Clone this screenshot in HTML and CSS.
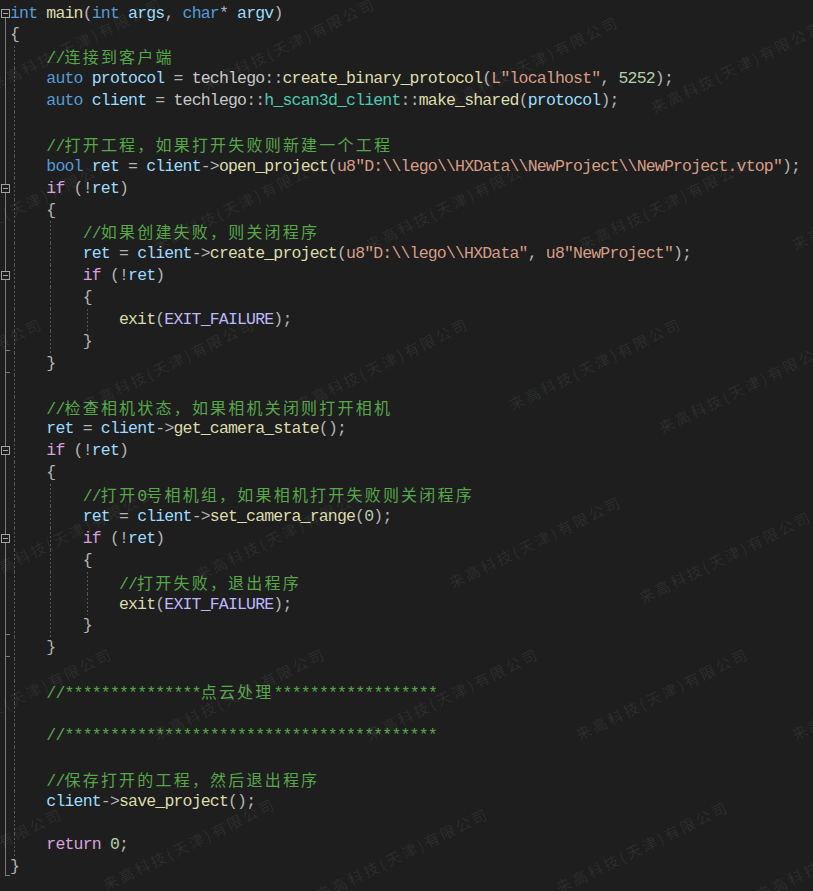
FILE: index.html
```html
<!DOCTYPE html>
<html>
<head>
<meta charset="utf-8">
<title>code</title>
<link rel="stylesheet" href="styles.css">
</head>
<body>
<div class="editor">
<div class="ln"><span class="gut box first"></span><span class="code"><span class="kw">int</span> <span class="fn">main</span>(<span class="kw">int</span> <span class="var">args</span>, <span class="kw">char</span>* <span class="var">argv</span>)</span></div>
<div class="ln"><span class="gut"></span><span class="code">{</span></div>
<div class="ln"><span class="gut"></span><span class="code"><span class="ind g"></span><span class="cm">//<span class="cjk">连接到客户端</span></span></span></div>
<div class="ln"><span class="gut"></span><span class="code"><span class="ind g"></span><span class="kw">auto</span> <span class="var">protocol</span> = <span class="ns">techlego</span>::<span class="fn">create_binary_protocol</span>(<span class="str">L"localhost"</span>, <span class="num">5252</span>);</span></div>
<div class="ln"><span class="gut"></span><span class="code"><span class="ind g"></span><span class="kw">auto</span> <span class="var">client</span> = <span class="ns">techlego</span>::<span class="ty">h_scan3d_client</span>::<span class="fn">make_shared</span>(<span class="var">protocol</span>);</span></div>
<div class="ln"><span class="gut"></span><span class="code"><span class="ind g"></span></span></div>
<div class="ln"><span class="gut"></span><span class="code"><span class="ind g"></span><span class="cm">//<span class="cjk">打开工程，如果打开失败则新建一个工程</span></span></span></div>
<div class="ln"><span class="gut"></span><span class="code"><span class="ind g"></span><span class="kw">bool</span> <span class="var">ret</span> = <span class="var">client</span>-&gt;<span class="fn">open_project</span>(<span class="str">u8"D:\\lego\\HXData\\NewProject\\NewProject.vtop"</span>);</span></div>
<div class="ln"><span class="gut box"></span><span class="code"><span class="ind g"></span><span class="ctl">if</span> (!<span class="var">ret</span>)</span></div>
<div class="ln"><span class="gut"></span><span class="code"><span class="ind g"></span>{</span></div>
<div class="ln"><span class="gut"></span><span class="code"><span class="ind g"></span><span class="ind g"></span><span class="cm">//<span class="cjk">如果创建失败，则关闭程序</span></span></span></div>
<div class="ln"><span class="gut"></span><span class="code"><span class="ind g"></span><span class="ind g"></span><span class="var">ret</span> = <span class="var">client</span>-&gt;<span class="fn">create_project</span>(<span class="str">u8"D:\\lego\\HXData"</span>, <span class="str">u8"NewProject"</span>);</span></div>
<div class="ln"><span class="gut box"></span><span class="code"><span class="ind g"></span><span class="ind g"></span><span class="ctl">if</span> (!<span class="var">ret</span>)</span></div>
<div class="ln"><span class="gut"></span><span class="code"><span class="ind g"></span><span class="ind g"></span>{</span></div>
<div class="ln"><span class="gut"></span><span class="code"><span class="ind g"></span><span class="ind g"></span><span class="ind g"></span><span class="fn">exit</span>(<span class="mac">EXIT_FAILURE</span>);</span></div>
<div class="ln"><span class="gut end"></span><span class="code"><span class="ind g"></span><span class="ind g"></span>}</span></div>
<div class="ln"><span class="gut end"></span><span class="code"><span class="ind g"></span>}</span></div>
<div class="ln"><span class="gut"></span><span class="code"><span class="ind g"></span></span></div>
<div class="ln"><span class="gut"></span><span class="code"><span class="ind g"></span><span class="cm">//<span class="cjk">检查相机状态，如果相机关闭则打开相机</span></span></span></div>
<div class="ln"><span class="gut"></span><span class="code"><span class="ind g"></span><span class="var">ret</span> = <span class="var">client</span>-&gt;<span class="fn">get_camera_state</span>();</span></div>
<div class="ln"><span class="gut box"></span><span class="code"><span class="ind g"></span><span class="ctl">if</span> (!<span class="var">ret</span>)</span></div>
<div class="ln"><span class="gut"></span><span class="code"><span class="ind g"></span>{</span></div>
<div class="ln"><span class="gut"></span><span class="code"><span class="ind g"></span><span class="ind g"></span><span class="cm">//<span class="cjk">打开</span>0<span class="cjk">号相机组，如果相机打开失败则关闭程序</span></span></span></div>
<div class="ln"><span class="gut"></span><span class="code"><span class="ind g"></span><span class="ind g"></span><span class="var">ret</span> = <span class="var">client</span>-&gt;<span class="fn">set_camera_range</span>(<span class="num">0</span>);</span></div>
<div class="ln"><span class="gut box"></span><span class="code"><span class="ind g"></span><span class="ind g"></span><span class="ctl">if</span> (!<span class="var">ret</span>)</span></div>
<div class="ln"><span class="gut"></span><span class="code"><span class="ind g"></span><span class="ind g"></span>{</span></div>
<div class="ln"><span class="gut"></span><span class="code"><span class="ind g"></span><span class="ind g"></span><span class="ind g"></span><span class="cm">//<span class="cjk">打开失败，退出程序</span></span></span></div>
<div class="ln"><span class="gut"></span><span class="code"><span class="ind g"></span><span class="ind g"></span><span class="ind g"></span><span class="fn">exit</span>(<span class="mac">EXIT_FAILURE</span>);</span></div>
<div class="ln"><span class="gut end"></span><span class="code"><span class="ind g"></span><span class="ind g"></span>}</span></div>
<div class="ln"><span class="gut end"></span><span class="code"><span class="ind g"></span>}</span></div>
<div class="ln"><span class="gut"></span><span class="code"><span class="ind g"></span></span></div>
<div class="ln"><span class="gut"></span><span class="code"><span class="ind g"></span><span class="cm">//***************<span class="cjk">点云处理</span>******************</span></span></div>
<div class="ln"><span class="gut"></span><span class="code"><span class="ind g"></span></span></div>
<div class="ln"><span class="gut"></span><span class="code"><span class="ind g"></span><span class="cm">//*****************************************</span></span></div>
<div class="ln"><span class="gut"></span><span class="code"><span class="ind g"></span></span></div>
<div class="ln"><span class="gut"></span><span class="code"><span class="ind g"></span><span class="cm">//<span class="cjk">保存打开的工程，然后退出程序</span></span></span></div>
<div class="ln"><span class="gut"></span><span class="code"><span class="ind g"></span><span class="var">client</span>-&gt;<span class="fn">save_project</span>();</span></div>
<div class="ln"><span class="gut"></span><span class="code"><span class="ind g"></span></span></div>
<div class="ln"><span class="gut"></span><span class="code"><span class="ind g"></span><span class="ctl">return</span> <span class="num">0</span>;</span></div>
<div class="ln"><span class="gut end last"></span><span class="code">}</span></div>
</div>

<div class="wm">
<span style="left:-6px;top:77px">来高科技(天津)有限公司</span>
<span style="left:207px;top:77px">来高科技(天津)有限公司</span>
<span style="left:450px;top:95px">来高科技(天津)有限公司</span>
<span style="left:655px;top:100px">来高科技(天津)有限公司</span>
<span style="left:-56px;top:237px">来高科技(天津)有限公司</span>
<span style="left:157px;top:237px">来高科技(天津)有限公司</span>
<span style="left:370px;top:237px">来高科技(天津)有限公司</span>
<span style="left:583px;top:237px">来高科技(天津)有限公司</span>
<span style="left:796px;top:237px">来高科技(天津)有限公司</span>
<span style="left:-126px;top:397px">来高科技(天津)有限公司</span>
<span style="left:87px;top:397px">来高科技(天津)有限公司</span>
<span style="left:300px;top:397px">来高科技(天津)有限公司</span>
<span style="left:513px;top:397px">来高科技(天津)有限公司</span>
<span style="left:663px;top:420px">来高科技(天津)有限公司</span>
<span style="left:-13px;top:567px">来高科技(天津)有限公司</span>
<span style="left:200px;top:567px">来高科技(天津)有限公司</span>
<span style="left:453px;top:575px">来高科技(天津)有限公司</span>
<span style="left:643px;top:590px">来高科技(天津)有限公司</span>
<span style="left:-56px;top:727px">来高科技(天津)有限公司</span>
<span style="left:157px;top:727px">来高科技(天津)有限公司</span>
<span style="left:370px;top:727px">来高科技(天津)有限公司</span>
<span style="left:580px;top:727px">来高科技(天津)有限公司</span>
<span style="left:796px;top:727px">来高科技(天津)有限公司</span>
<span style="left:-106px;top:887px">来高科技(天津)有限公司</span>
<span style="left:107px;top:877px">来高科技(天津)有限公司</span>
<span style="left:320px;top:887px">来高科技(天津)有限公司</span>
<span style="left:560px;top:880px">来高科技(天津)有限公司</span>
<span style="left:760px;top:887px">来高科技(天津)有限公司</span>
</div>
</body>
</html>
```
FILE: styles.css
```css
html, body {
  margin: 0;
  padding: 0;
}

body {
  background: #1e1e1e;
  width: 813px;
  height: 891px;
  overflow: hidden;
  position: relative;
}

.editor {
  padding-top: 2.5px;
  font-family: "Liberation Mono", monospace;
  font-size: 16.5px;
  letter-spacing: -0.82px;
  color: #b4b4b4;
}

.ln {
  display: flex;
  height: 21.9px;
  line-height: 21.9px;
}

.gut {
  width: 10px;
  flex: none;
  position: relative;
}

.code {
  white-space: pre;
}

/* fold margin */
.gut::after {
  content: "";
  position: absolute;
  left: 5px;
  top: 0;
  bottom: 0;
  width: 1px;
  background: #7a7a7a;
}

.gut.box.first::after {
  top: 15px;
}

.gut.box::before {
  content: "";
  position: absolute;
  left: 1px;
  top: 6px;
  width: 9px;
  height: 9px;
  box-sizing: border-box;
  border: 1px solid #a3a3a3;
  background: #1e1e1e linear-gradient(#a3a3a3, #a3a3a3) center / 5px 1px no-repeat;
  z-index: 1;
}

.gut.end::before {
  content: "";
  position: absolute;
  left: 5px;
  bottom: 2px;
  width: 5px;
  height: 1px;
  background: #7a7a7a;
}

.gut.last::after {
  bottom: 2px;
}

/* indent guides */
.ind {
  display: inline-block;
  width: 36.32px;
  height: 21.9px;
  vertical-align: top;
}

.ind.g {
  background-image: repeating-linear-gradient(to bottom, #555555 0 2px, transparent 2px 4px);
  background-size: 1px 100%;
  background-position: 4px 0;
  background-repeat: no-repeat;
}

/* syntax colours */
.kw { color: #569cd6; }
.ctl { color: #d8a0df; }
.fn { color: #dcdcaa; }
.var { color: #9cdcfe; }
.ty { color: #4ec9b0; }
.ns { color: #c8c8c8; }
.str { color: #d69d85; }
.num { color: #b5cea8; }
.mac { color: #beb7ff; }
.cm { color: #57a64a; }

.cjk {
  font-family: "Noto Sans CJK SC", sans-serif;
  font-size: 16px;
  letter-spacing: 2.2px;
}

/* watermark */
.wm {
  position: absolute;
  inset: 0;
  pointer-events: none;
  overflow: hidden;
}

.wm span {
  position: absolute;
  font-family: "Noto Sans CJK SC", sans-serif;
  font-size: 15px;
  line-height: 15px;
  letter-spacing: 2.5px;
  white-space: nowrap;
  color: rgba(255, 255, 255, 0.075);
  transform-origin: 0 100%;
  transform: rotate(-26deg);
}
```
